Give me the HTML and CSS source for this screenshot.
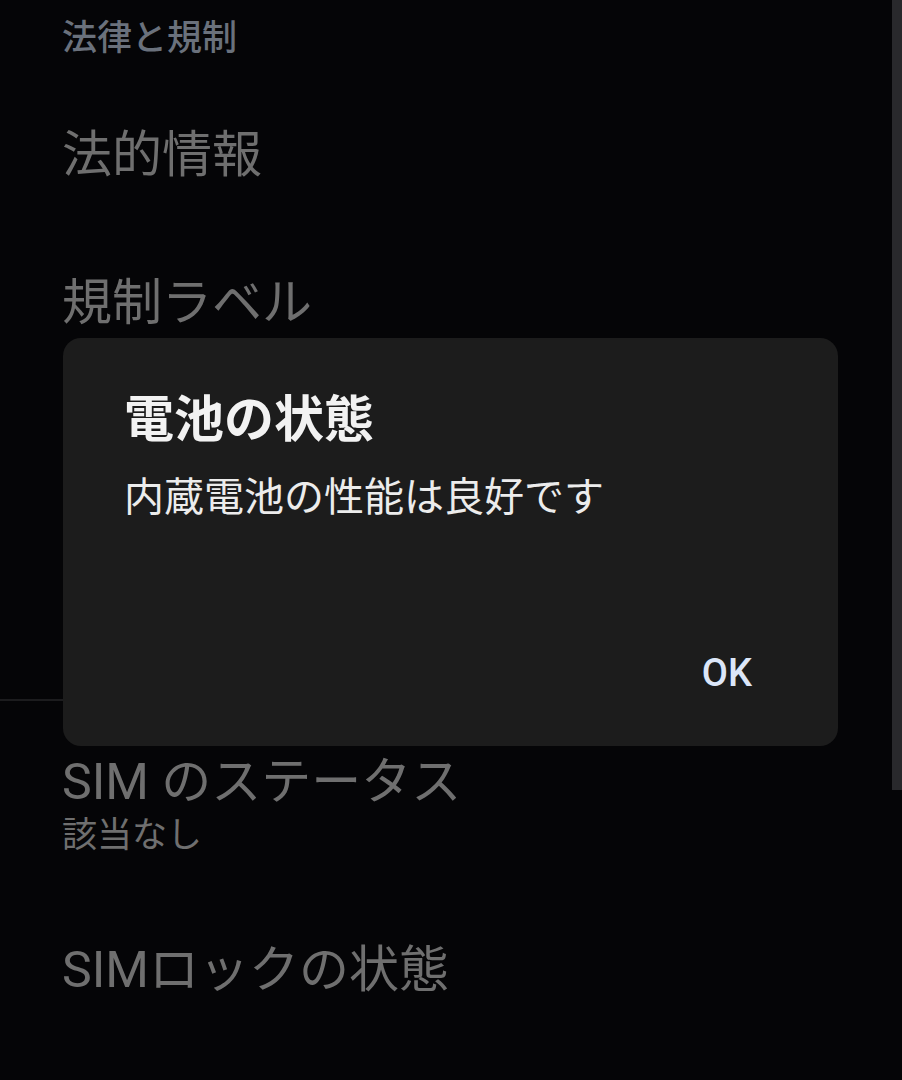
FILE: index.html
```html
<!DOCTYPE html>
<html lang="ja">
<head>
  <meta charset="UTF-8" />
  <meta name="viewport" content="width=device-width, initial-scale=1.0"/>
  <title>端末情報</title>
  <link rel="stylesheet" href="styles.css">
</head>
<body>
  <div class="settings">
    <div class="section-title">法律と規制</div>
    <div class="item item-first">法的情報</div>
    <div class="item">規制ラベル</div>

    <div class="divider"></div>

    <div class="item item-after-divider">
      <div>SIM のステータス</div>
      <div class="summary">該当なし</div>
    </div>
    <div class="item item-last">SIMロックの状態</div>
  </div>

  <div class="scrollbar"></div>

  <div class="dialog">
    <div class="dialog-title">電池の状態</div>
    <div class="dialog-body">内蔵電池の性能は良好です</div>
    <div class="dialog-actions">
      <button class="dialog-btn">OK</button>
    </div>
  </div>
</body>
</html>
```

FILE: styles.css
```css
body {
  font-family: Roboto, 'Noto Sans CJK JP', sans-serif;
  background-color: #050507;
  margin: 0;
  padding: 0;
  width: 902px;
  height: 1080px;
  overflow: hidden;
  position: relative;
}

.settings {
  padding-left: 62px;
  padding-top: 21px;
}

.section-title {
  font-size: 35px;
  line-height: 35px;
  font-weight: 500;
  color: #6a717c;
}

.item {
  font-size: 50px;
  line-height: 50px;
  color: #6f6f6f;
  margin-top: 98px;
}

.item-first {
  margin-top: 74px;
}

.divider {
  height: 2px;
  width: 830px;
  margin-left: -62px;
  margin-top: 371px;
  background-color: #1c1c1e;
}

.item.item-after-divider {
  margin-top: 56px;
}

.summary {
  font-size: 35px;
  line-height: 35px;
  margin-top: 11px;
}

.item.item-last {
  margin-top: 92px;
}

.scrollbar {
  position: absolute;
  top: 0;
  right: 0;
  width: 10px;
  height: 790px;
  background-color: #29292c;
}

.dialog {
  position: absolute;
  top: 338px;
  left: 63px;
  width: 775px;
  height: 408px;
  box-sizing: border-box;
  padding: 57px 86px 0 61px;
  border-radius: 18px;
  background-color: #1c1c1c;
}

.dialog-title {
  font-size: 50px;
  line-height: 50px;
  font-weight: 700;
  color: #f2f2f2;
}

.dialog-body {
  font-size: 40px;
  line-height: 40px;
  color: #ececec;
  margin-top: 33px;
}

.dialog-actions {
  display: flex;
  justify-content: flex-end;
  margin-top: 136px;
}

.dialog-btn {
  font-family: Roboto, sans-serif;
  font-size: 38px;
  line-height: 38px;
  font-weight: 500;
  color: #dce6f8;
  background: none;
  border: none;
  padding: 0;
}
```
